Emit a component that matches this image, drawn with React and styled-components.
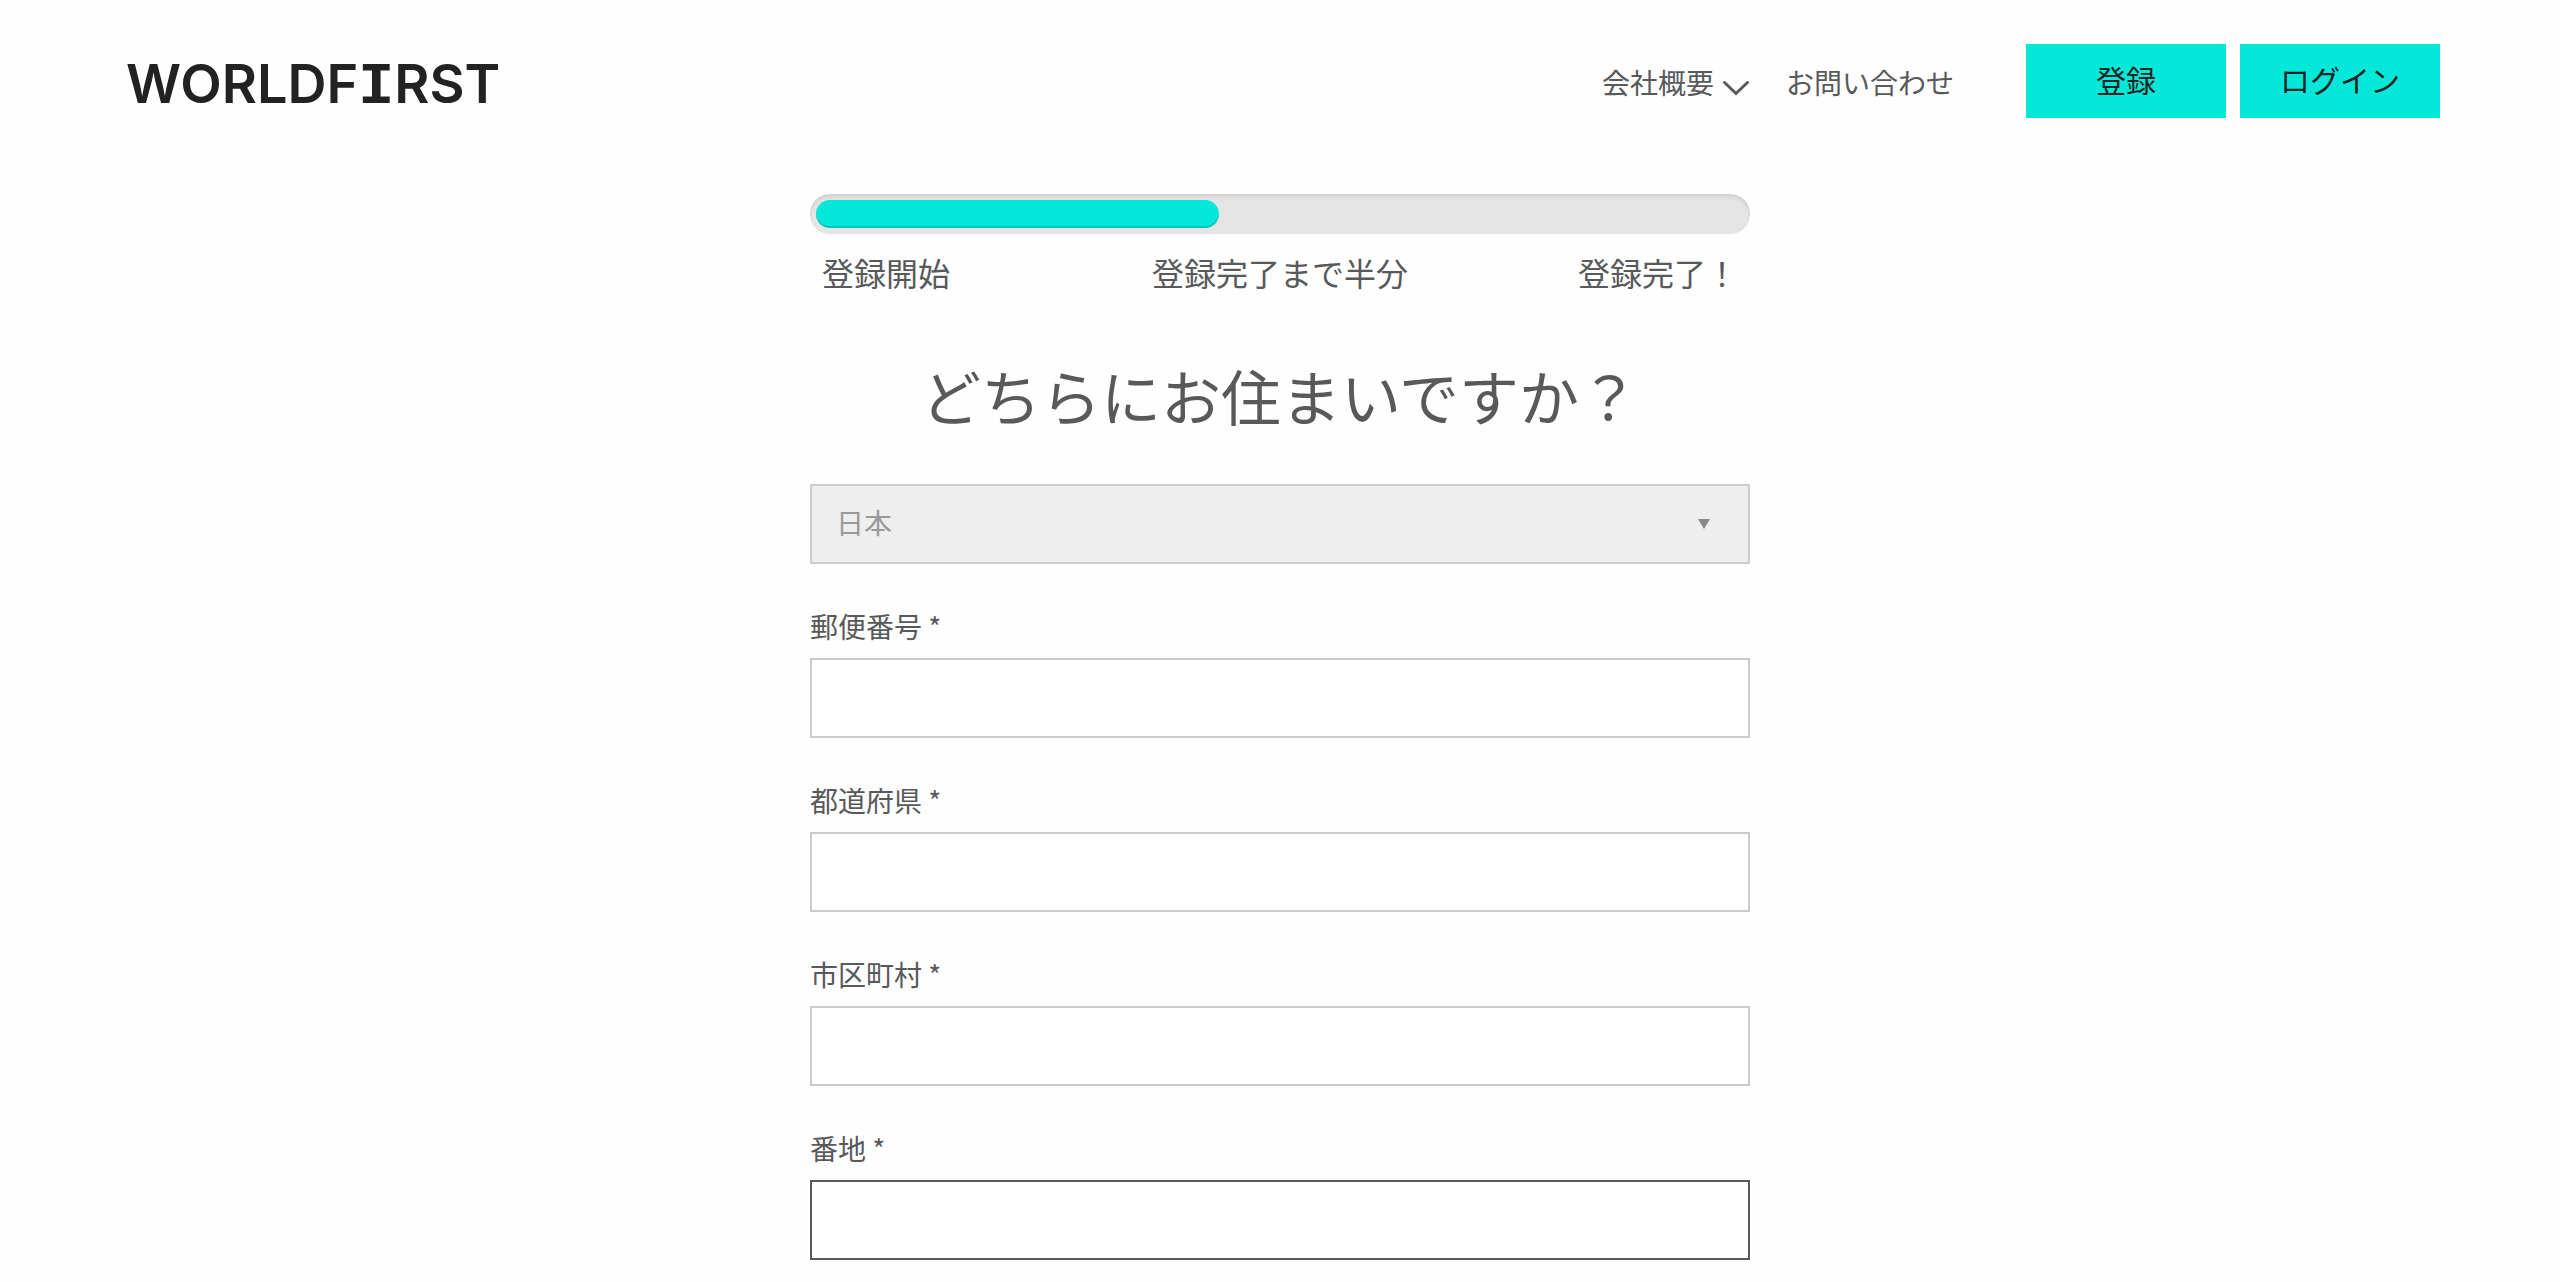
import React from "react";
import styled, { createGlobalStyle } from "styled-components";

const color = {
  text: "#58595b",
  ink: "#212322",
  accent: "#03e8d8",
  border: "#cbcbcb",
  muted: "#999999",
  track: "#e5e5e5",
};

const GlobalStyle = createGlobalStyle`
  *, *::before, *::after { box-sizing: border-box; }
  body {
    margin: 0;
    background: #fefefe;
    color: ${color.text};
    font-family: "Noto Sans CJK JP", "Liberation Sans", sans-serif;
    font-size: 28px;
    line-height: 40px;
  }
`;

const Header = styled.header`
  display: flex;
  align-items: center;
  justify-content: space-between;
  padding: 44px 120px 44px 126px;
`;

const Logo = styled.a`
  padding-top: 8px;
  color: ${color.ink};
  font-family: Inter, "Liberation Sans", sans-serif;
  font-size: 54px;
  font-weight: 600;
  line-height: 60px;
  text-decoration: none;
`;

const SlabLetter = styled.span`
  font-family: "Liberation Mono", monospace;
  font-size: 60px;
  font-weight: 700;
  line-height: 1;
`;

const HeaderRight = styled.div`
  display: flex;
  align-items: center;
  gap: 72px;
`;

const Nav = styled.nav`
  display: flex;
  align-items: center;
  gap: 36px;
  padding-top: 2px;
`;

const NavLink = styled.a`
  display: flex;
  align-items: center;
  gap: 8px;
  color: ${color.text};
  text-decoration: none;
`;

const Chevron = styled.svg`
  width: 28px;
  height: 16px;
  margin-top: 12px;
`;

const ButtonGroup = styled.div`
  display: flex;
  gap: 14px;
`;

const HeaderButton = styled.button`
  width: 200px;
  height: 74px;
  padding: 0 0 4px;
  border: 0;
  background: ${color.accent};
  color: ${color.ink};
  font: inherit;
  font-size: 30px;
  cursor: pointer;
`;

const Main = styled.main`
  width: 100%;
  max-width: 940px;
  margin: 0 auto;
  padding: 32px 0 20px;
`;

const ProgressTrack = styled.div`
  padding: 6px;
  border-radius: 20px;
  background: ${color.track};
  box-shadow: inset 0 3px 5px -1px rgba(0, 0, 0, 0.12);
`;

const ProgressFill = styled.div`
  height: 28px;
  border-radius: 14px;
  background: ${color.accent};
  box-shadow: inset 0 -2px 0 rgba(0, 0, 0, 0.15);
`;

const Steps = styled.ol`
  display: grid;
  grid-template-columns: 1fr auto 1fr;
  margin: 0;
  padding: 14px 12px 0;
  list-style: none;
  font-size: 32px;
  line-height: 48px;
`;

const Step = styled.li`
  &:last-child {
    text-align: right;
  }
`;

const Title = styled.h1`
  margin: 54px 0 44px;
  font-size: 60px;
  font-weight: 400;
  line-height: 90px;
  text-align: center;
`;

const Form = styled.form`
  display: flex;
  flex-direction: column;
  gap: 42px;
`;

const Field = styled.div`
  display: flex;
  flex-direction: column;
  gap: 12px;
`;

const Label = styled.label`
  display: block;
`;

const Input = styled.input`
  width: 100%;
  height: 80px;
  padding: 0 24px;
  border: 2px solid ${(p) => (p.$active ? color.text : color.border)};
  border-radius: 0;
  outline: 0;
  background: #fff;
  color: ${color.text};
  font: inherit;
`;

const SelectBox = styled.div`
  position: relative;
`;

const Select = styled.select`
  display: block;
  width: 100%;
  height: 80px;
  padding: 0 72px 4px 24px;
  border: 2px solid ${color.border};
  border-radius: 0;
  appearance: none;
  background: #eeeeee;
  color: ${color.muted};
  font: inherit;
  opacity: 1;
`;

const SelectArrow = styled.svg`
  position: absolute;
  top: 35px;
  right: 40px;
  width: 12px;
  height: 10px;
  pointer-events: none;
`;

const fields = [
  { id: "postcode", label: "郵便番号 *" },
  { id: "prefecture", label: "都道府県 *" },
  { id: "city", label: "市区町村 *" },
  { id: "street", label: "番地 *", active: true },
];

const steps = ["登録開始", "登録完了まで半分", "登録完了！"];

export default function App() {
  const progress = 43.4;
  return (
    <>
      <GlobalStyle />
      <Header>
        <Logo href="#">
          WORLDF<SlabLetter>I</SlabLetter>RST
        </Logo>
        <HeaderRight>
          <Nav>
            <NavLink href="#about">
              会社概要
              <Chevron viewBox="0 0 28 16" aria-hidden="true">
                <path
                  d="M2.5 2.5 L14 13.5 L25.5 2.5"
                  fill="none"
                  stroke={color.text}
                  strokeWidth="3"
                  strokeLinecap="round"
                />
              </Chevron>
            </NavLink>
            <NavLink href="#contact">お問い合わせ</NavLink>
          </Nav>
          <ButtonGroup>
            <HeaderButton type="button">登録</HeaderButton>
            <HeaderButton type="button">ログイン</HeaderButton>
          </ButtonGroup>
        </HeaderRight>
      </Header>
      <Main>
        <ProgressTrack
          role="progressbar"
          aria-label="登録"
          aria-valuenow={progress}
          aria-valuemin={0}
          aria-valuemax={100}
        >
          <ProgressFill style={{ width: `${progress}%` }} />
        </ProgressTrack>
        <Steps>
          {steps.map((s) => (
            <Step key={s}>{s}</Step>
          ))}
        </Steps>
        <Title>どちらにお住まいですか？</Title>
        <Form>
          <SelectBox>
            <Select aria-label="国" disabled defaultValue="jp">
              <option value="jp">日本</option>
            </Select>
            <SelectArrow viewBox="0 0 12 10" aria-hidden="true">
              <path d="M0 0 H12 L6 10 Z" fill="#888888" />
            </SelectArrow>
          </SelectBox>
          {fields.map((f) => (
            <Field key={f.id}>
              <Label htmlFor={f.id}>{f.label}</Label>
              <Input id={f.id} name={f.id} type="text" $active={f.active} />
            </Field>
          ))}
        </Form>
      </Main>
    </>
  );
}
